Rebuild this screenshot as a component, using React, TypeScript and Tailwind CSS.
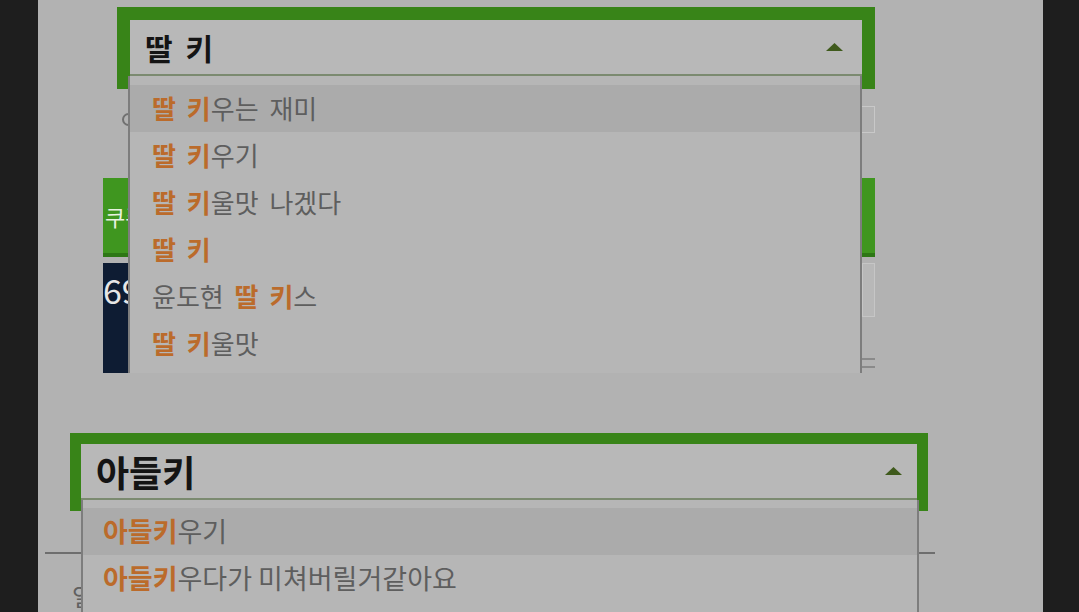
import React from "react";

const FONT = { fontFamily: '"Noto Sans CJK KR", "Noto Sans", sans-serif' };

function Caret() {
  return (
    <svg width="17" height="8" viewBox="0 0 17 8" className="shrink-0">
      <polygon points="8.5,0 17,8 0,8" fill="#3f5a1c" />
    </svg>
  );
}

type Item = { parts: { t: string; hl?: boolean }[]; active?: boolean };

const topItems: Item[] = [
  { parts: [{ t: "딸 키", hl: true }, { t: "우는 재미" }], active: true },
  { parts: [{ t: "딸 키", hl: true }, { t: "우기" }] },
  { parts: [{ t: "딸 키", hl: true }, { t: "울맛 나겠다" }] },
  { parts: [{ t: "딸 키", hl: true }] },
  { parts: [{ t: "윤도현 " }, { t: "딸 키", hl: true }, { t: "스" }] },
  { parts: [{ t: "딸 키", hl: true }, { t: "울맛" }] },
];

const bottomItems: Item[] = [
  { parts: [{ t: "아들키", hl: true }, { t: "우기" }], active: true },
  { parts: [{ t: "아들키", hl: true }, { t: "우다가 미쳐버릴거같아요" }] },
];

function Row({ item, pl }: { item: Item; pl: string }) {
  return (
    <div
      className={`h-[47px] flex items-center whitespace-pre ${pl} ${
        item.active ? "bg-[#ababab]" : ""
      }`}
    >
      <span className="-mt-[2px]">
        {item.parts.map((p, i) =>
          p.hl ? (
            <span key={i} className="font-bold text-[#bb6b2b]">
              {p.t}
            </span>
          ) : (
            <span key={i} className="text-[#5e5e5e]">
              {p.t}
            </span>
          )
        )}
      </span>
    </div>
  );
}

export default function App() {
  return (
    <div className="w-[1079px] h-[612px] flex overflow-hidden" style={FONT}>
      <div className="w-[38px] shrink-0 bg-[#1e1e1e]" />
      <div className="flex-1 bg-[#b2b2b2] overflow-hidden flex flex-col">
        {/* Section 1 */}
        <div className="relative h-[373px] shrink-0 overflow-hidden">
          <div className="pt-[7px] pl-[79px]">
            <div className="w-[758px] h-[82px] border-[13px] border-[#388418] bg-[#b8b8b8]">
              <div className="h-[56px] border-b-2 border-[#7b8a70] flex items-center justify-between pl-[15px] pr-[19px]">
                <span className="text-[30px] font-bold text-[#141414] [word-spacing:6px] leading-none">
                  딸 키
                </span>
                <Caret />
              </div>
            </div>
          </div>

          {/* underlying page content */}
          <div className="ml-[65px] w-[772px] flex flex-col">
            <div className="mt-[17px] h-[27px] flex items-center justify-between">
              <div className="ml-[19px] w-[13px] h-[13px] rounded-full border-2 border-[#707070]" />
              <div className="w-[14px] h-[27px] border border-[#c8c8c8]" />
            </div>
            <div className="mt-[45px] h-[79px] bg-[#3f961f] border-b-[4px] border-[#2d7715] flex items-center pl-[2px]">
              <span className="text-[22px] text-[#e8f2e0] leading-none">쿠폰</span>
            </div>
            <div className="mt-[6px] h-[110px] flex justify-between">
              <div className="w-[80px] bg-[#0e1c33] pt-[10px]">
                <span className="text-[34px] text-[#e6e6e6] leading-none">69</span>
              </div>
              <div className="w-[13px] flex flex-col">
                <div className="h-[54px] border border-[#c6c6c6] bg-[#b8b8b8]" />
                <div className="mt-[41px] h-[2px] bg-[#8a8a8a]" />
                <div className="mt-[6px] h-[2px] bg-[#8a8a8a]" />
              </div>
            </div>
          </div>

          {/* dropdown overlay */}
          <div className="absolute left-[90px] top-[76px] w-[734px] h-[297px] border-x-2 border-[#7d7d7d] bg-[#b6b6b6] pt-[9px] overflow-hidden text-[26px] leading-none [word-spacing:5px]">
            {topItems.map((it, i) => (
              <Row key={i} item={it} pl="pl-[22px]" />
            ))}
          </div>
        </div>

        {/* Section 2 */}
        <div className="relative flex-1">
          <div className="mt-[60px] ml-[32px]">
            <div className="w-[858px] h-[78px] border-[11px] border-[#388418] bg-[#b8b8b8]">
              <div className="h-[56px] border-b-2 border-[#7b8a70] flex items-center justify-between pl-[15px] pr-[15px]">
                <span className="text-[36px] font-bold text-[#141414] leading-none">아들키</span>
                <Caret />
              </div>
            </div>
          </div>
          <div className="mt-[41px] ml-[7px] w-[890px] h-[2px] bg-[#6e6e6e]" />
          <div className="mt-[30px] ml-[34px] text-[24px] text-[#606060] leading-none">일</div>

          <div className="absolute left-[43px] top-[127px] w-[838px] h-[200px] border-x-2 border-[#7d7d7d] bg-[#b6b6b6] pt-[8px] overflow-hidden text-[27px] leading-none">
            {bottomItems.map((it, i) => (
              <Row key={i} item={it} pl="pl-[20px]" />
            ))}
          </div>
        </div>
      </div>
      <div className="w-[36px] shrink-0 bg-[#1e1e1e]" />
    </div>
  );
}
